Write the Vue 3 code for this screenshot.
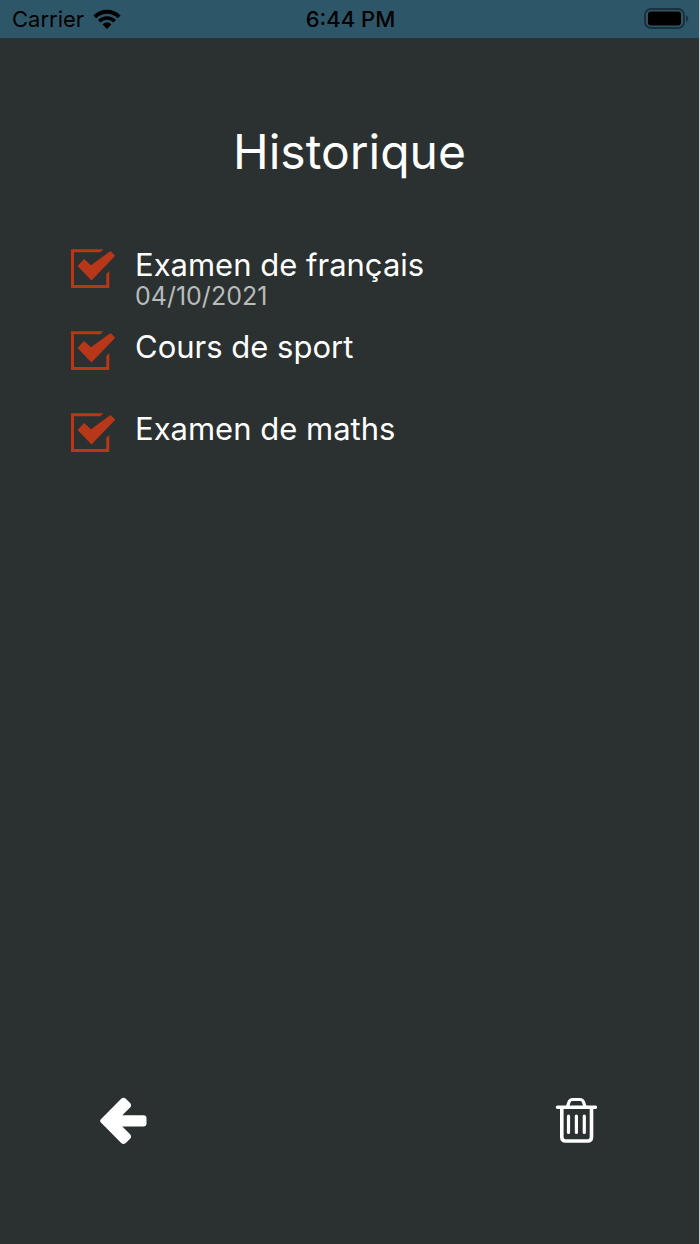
<template>
    <div class="screen">
        <header class="status-bar">
            <div class="status-bar__left">
                <span>Carrier</span>
                <svg width="28" height="20" viewBox="0 0 28 20" fill="none">
                    <path d="M1.8 7.8C8.6 0.9 19.4 0.9 26.2 7.8" stroke="currentColor" stroke-width="4" />
                    <path d="M6.3 12.2C10.6 7.9 17.4 7.9 21.7 12.2" stroke="currentColor" stroke-width="3.6" />
                    <path d="M9.6 15.4C12 13 16 13 18.4 15.4L14 20Z" fill="currentColor" />
                </svg>
            </div>
            <span class="status-bar__time">{{ time }}</span>
            <div class="status-bar__right">
                <svg width="45" height="22" viewBox="0 0 45 22" fill="none">
                    <rect x="1" y="1" width="39" height="19" rx="6" stroke="#1b323e" stroke-width="2" />
                    <rect x="4" y="3.5" width="33" height="14" rx="3" fill="currentColor" />
                    <path d="M42 7C45 8.5 45 12.5 42 14Z" fill="#1b323e" />
                </svg>
            </div>
        </header>

        <main class="history">
            <h1 class="history__title">Historique</h1>
            <ul class="history__list">
                <li v-for="task in tasks" :key="task.id">
                    <label class="task">
                        <input v-model="task.done" type="checkbox" class="task__input" />
                        <svg class="task__box" width="46" height="40" viewBox="0 0 46 40">
                            <path v-if="task.done" d="M33.5 0.3H1V39H39.3V22L36.3 25V36H4V3.3H30Z" fill="currentColor" />
                            <path v-else d="M1 0H39V39H1ZM4 3V36H36V3Z" fill="currentColor" fill-rule="evenodd" />
                            <path v-if="task.done" d="M7.5 17L14 10L21 16.3L40.5 2L45.2 6.8L21.5 31.5Z" fill="currentColor" />
                        </svg>
                        <span class="task__text">
                            <span class="task__name">{{ task.name }}</span>
                            <span v-if="task.date" class="task__date">{{ task.date }}</span>
                        </span>
                    </label>
                </li>
            </ul>
        </main>

        <footer class="actions">
            <button type="button" class="actions__btn" aria-label="Retour">
                <svg width="48" height="48" viewBox="0 0 48 48" fill="currentColor">
                    <path d="M0.9 22.2L21.2 1.7Q23.5 -0.4 25.8 1.7L30.1 6Q32.2 8.3 30.1 10.6L22.3 18.2H43.5Q46.5 18.2 46.5 21V26.6Q46.5 29.5 43.5 29.5H22.3L30.1 37.2Q32.2 39.5 30.1 41.8L25.8 46Q23.5 48.1 21.2 46L0.9 25.6Q-0.6 23.9 0.9 22.2Z" />
                </svg>
            </button>
            <button type="button" class="actions__btn" aria-label="Vider l'historique" @click="clearHistory">
                <svg width="42" height="48" viewBox="0 0 42 48" fill="none" stroke="currentColor" stroke-linecap="round">
                    <path d="M2.5 10.3H40.3" stroke-width="3.5" />
                    <path d="M12.5 9.5L14 5Q15 2.5 17.5 2.5H25Q27.5 2.5 28.5 5L30 9.5" stroke-width="3.2" />
                    <path d="M6.8 11V40Q6.800 44 10.8 44H32.5Q36.5 44 36.5 40V11" stroke-width="3.6" />
                    <path d="M13.5 19.2V35.5M21.4 19.2V35.5M29.3 19.2V35.5" stroke-width="3.2" />
                </svg>
            </button>
        </footer>
    </div>
</template>

<script setup>
import { ref } from 'vue'

const time = '6:44 PM'

const tasks = ref([
    { id: 1, name: 'Examen de français', date: '04/10/2021', done: true },
    { id: 2, name: 'Cours de sport', date: '', done: true },
    { id: 3, name: 'Examen de maths', date: '', done: true }
])

const clearHistory = () => {
    tasks.value = []
}
</script>

<style>
body {
    margin: 0;
    background: #2b3030;
}
</style>

<style scoped>
.screen {
    box-sizing: border-box;
    display: flex;
    flex-direction: column;
    min-height: 100vh;
    border-right: 1px solid #c3d0d4;
    background: #2b3030;
    color: #ffffff;
    font-family: Inter, "Liberation Sans", sans-serif;
}

.status-bar {
    display: grid;
    grid-template-columns: 1fr auto 1fr;
    align-items: center;
    height: 38px;
    padding: 0 10px 0 12px;
    background: #2e5669;
    color: #000000;
    font-size: 22px;
}

.status-bar__left {
    display: flex;
    align-items: center;
    gap: 9px;
}

.status-bar__time {
    font-weight: 500;
}

.status-bar__right {
    display: flex;
    justify-content: flex-end;
}

.history {
    flex: 1;
    padding: 84px 70px 0;
}

.history__title {
    margin: 0 0 64px;
    font-size: 48px;
    font-weight: 400;
    line-height: 60px;
    text-align: center;
}

.history__list {
    display: flex;
    flex-direction: column;
    gap: 12px;
    margin: 0;
    padding: 0;
    list-style: none;
}

.task {
    display: flex;
    align-items: flex-start;
    gap: 19px;
    min-height: 70px;
    cursor: pointer;
}

.task__input {
    position: absolute;
    opacity: 0;
}

.task__box {
    flex: none;
    margin-top: 3px;
    color: #b83718;
}

.task__input:focus-visible + .task__box {
    outline: 2px solid #ffffff;
    outline-offset: 4px;
}

.task__text {
    display: flex;
    flex-direction: column;
}

.task__name {
    font-size: 31px;
    line-height: 37px;
}

.task__date {
    color: #b9bbbb;
    font-size: 25px;
    line-height: 26px;
}

.actions {
    display: flex;
    align-items: center;
    justify-content: space-between;
    padding: 0 102px 99px 100px;
}

.actions__btn {
    display: flex;
    padding: 0;
    border: none;
    background: none;
    color: #ffffff;
    cursor: pointer;
}
</style>
